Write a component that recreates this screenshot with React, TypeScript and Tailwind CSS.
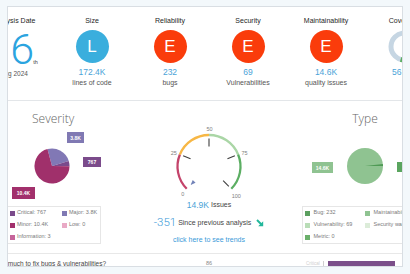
// Dashboard overview: quality gate metrics, severity / type breakdown and issue gauge.

const METRICS = [
  { title: "Size", letter: "L", circle: "bg-[#3aaedd]", value: "172.4K", sub: "lines of code" },
  { title: "Reliability", letter: "E", circle: "bg-[#fa3c0b]", value: "232", sub: "bugs" },
  { title: "Security", letter: "E", circle: "bg-[#fa3c0b]", value: "69", sub: "Vulnerabilities" },
  { title: "Maintainability", letter: "E", circle: "bg-[#fa3c0b]", value: "14.6K", sub: "quality issues" },
];

const SEVERITY_LEGEND = [
  { color: "bg-[#7b4b8b]", label: "Critical: 767" },
  { color: "bg-[#8079b3]", label: "Major: 3.8K" },
  { color: "bg-[#a2306c]", label: "Minor: 10.4K" },
  { color: "bg-[#e9a9c5]", label: "Low: 0" },
  { color: "bg-[#c6649a]", label: "Information: 3" },
];

const TYPE_LEGEND = [
  { color: "bg-[#5b9f5f]", label: "Bug: 232" },
  { color: "bg-[#8fc391]", label: "Maintainability: 14.6K" },
  { color: "bg-[#b9ddb7]", label: "Vulnerability: 69" },
  { color: "bg-[#dcecd9]", label: "Security warning: 0" },
  { color: "bg-[#6bb06b]", label: "Metric: 0" },
];

function Legend({ items, cols, gap }: { items: { color: string; label: string }[]; cols: string; gap: string }) {
  return (
    <div className={`grid ${cols} pl-[1.5px]`}>
      {items.map((it) => (
        <div key={it.label} className={`flex h-[12px] items-center ${gap} whitespace-nowrap`}>
          <span className={`h-[5px] w-[5px] shrink-0 ${it.color}`} />
          <span className="text-[5.5px] leading-none text-[#7a7a7a]">{it.label}</span>
        </div>
      ))}
    </div>
  );
}

function SeverityPie() {
  return (
    <svg width="108" height="76" viewBox="0 0 108 76">
      <path d="M44 40 L39.47 23.1 A17.5 17.5 0 0 1 60.74 34.88 Z" fill="#8178b5" />
      <path d="M44 40 L60.74 34.88 A17.5 17.5 0 0 1 61.5 40.31 Z" fill="#7a4a8c" />
      <path d="M44 40 L61.5 40.31 A17.5 17.5 0 1 1 39.47 23.1 Z" fill="#a0306b" />
      <rect x="59" y="6" width="17" height="11" fill="#8079b3" />
      <text x="67.5" y="11.7" fontSize="5" fontWeight="bold" fill="#fff" textAnchor="middle" dominantBaseline="central">3.8K</text>
      <rect x="75" y="31" width="18" height="10" fill="#7b4b8b" />
      <text x="84" y="36.2" fontSize="5" fontWeight="bold" fill="#fff" textAnchor="middle" dominantBaseline="central">767</text>
      <rect x="4" y="61" width="23" height="12" fill="#a2306c" />
      <text x="15.5" y="67.2" fontSize="5" fontWeight="bold" fill="#fff" textAnchor="middle" dominantBaseline="central">10.4K</text>
    </svg>
  );
}

function TypePie() {
  return (
    <svg width="126" height="76" viewBox="0 0 126 76">
      <circle cx="63" cy="40" r="18" fill="#8fc391" />
      <path d="M63 40 L80.9 38.12 A18 18 0 0 1 81 40 Z" fill="#4f9a55" />
      <rect x="10" y="36" width="21" height="11" fill="#8fc391" />
      <text x="20.5" y="41.7" fontSize="5" fontWeight="bold" fill="#fff" textAnchor="middle" dominantBaseline="central">14.6K</text>
      <rect x="95" y="36" width="22" height="10" fill="#5aa55f" />
      <text x="106" y="41.2" fontSize="5" fontWeight="bold" fill="#fff" textAnchor="middle" dominantBaseline="central">232</text>
    </svg>
  );
}

function Gauge() {
  const label = { fontSize: 5.5, fill: "#808080", textAnchor: "middle" as const, dominantBaseline: "central" as const };
  return (
    <svg width="186" height="99" viewBox="0 0 186 99">
      <g fill="none" strokeWidth="2.3">
        <path d="M70.73 87.77 A31.5 31.5 0 0 1 63.9 53.45" stroke="#c4446b" />
        <path d="M63.9 53.45 A31.5 31.5 0 0 1 93 34" stroke="#f7b745" />
        <path d="M93 34 A31.5 31.5 0 0 1 122.1 53.45" stroke="#aad6a6" />
        <path d="M122.1 53.45 A31.5 31.5 0 0 1 115.27 87.77" stroke="#5cae63" />
      </g>
      <g stroke="#3d3d3d" strokeWidth="1.1">
        <line x1="74.52" y1="57.85" x2="67.13" y2="54.79" />
        <line x1="93" y1="45.5" x2="93" y2="37.5" />
        <line x1="111.48" y1="57.85" x2="118.87" y2="54.79" />
        <line x1="107.14" y1="79.64" x2="112.8" y2="85.3" />
      </g>
      <polygon points="74.6,83.9 79.56,81.76 76.74,78.94" fill="#7283b8" />
      <text x="93.5" y="28.3" {...label}>50</text>
      <text x="57.8" y="51.7" {...label}>25</text>
      <text x="128.5" y="51.7" {...label}>75</text>
      <text x="66.7" y="93.3" {...label}>0</text>
      <text x="120.3" y="94.7" {...label}>100</text>
    </svg>
  );
}

export default function App() {
  return (
    <div className="h-[274px] w-[410px] overflow-hidden bg-[#f3f8fb] pl-[7px] pt-[6px] font-['Liberation_Sans',Arial,sans-serif]">
      <div className="flex h-[261px] w-[396px] flex-col overflow-hidden border border-[#d9dee3] bg-white">
        {/* metrics row */}
        <div className="flex h-[94px] shrink-0 border-b border-[#e3e6e9] pt-[9px]">
          <div className="-ml-[33px] flex w-[78px] shrink-0 flex-col items-center">
            <div className="whitespace-nowrap text-[7px] leading-[10px] text-[#262626]">Analysis Date</div>
            <div className="ml-[20px] mt-[4.9px] flex items-baseline">
              <span className="font-['Roboto'] text-[43px] font-light leading-[36px] text-[#2ba4df]">6</span>
              <span className="-ml-[1px] text-[5.5px] leading-none text-[#444]">th</span>
            </div>
            <div className="mt-[3.6px] whitespace-nowrap text-[6.5px] leading-[8px] text-[#555]">Aug 2024</div>
          </div>
          {METRICS.map((m) => (
            <div key={m.title} className="flex w-[78px] shrink-0 flex-col items-center">
              <div className="whitespace-nowrap text-[7px] leading-[10px] text-[#262626]">{m.title}</div>
              <div className={`mt-[4px] flex h-[33px] w-[33px] items-center justify-center rounded-full text-[17px] text-white ${m.circle}`}>
                {m.letter}
              </div>
              <div className="mt-[3.5px] text-[8.5px] leading-[11px] text-[#4aa3d8]">{m.value}</div>
              <div className="whitespace-nowrap text-[7px] leading-[10px] text-[#555]">{m.sub}</div>
            </div>
          ))}
          <div className="flex w-[78px] shrink-0 flex-col items-center">
            <div className="whitespace-nowrap text-[7px] leading-[10px] text-[#262626]">Coverage</div>
            <svg className="mt-[4px]" width="33" height="33" viewBox="0 0 33 33">
              <circle cx="16.5" cy="16.5" r="13.5" fill="none" stroke="#c6d6e3" strokeWidth="5" />
              <path d="M15.3 29.95 A13.5 13.5 0 0 1 12.6 29.4" fill="none" stroke="#5cae63" strokeWidth="5" />
            </svg>
            <div className="mt-[3.5px] text-[8.5px] leading-[11px] text-[#4aa3d8]">56.9%</div>
          </div>
        </div>

        {/* charts row */}
        <div className="flex h-[153px] shrink-0 border-b border-[#e8e8e8]">
          <div className="flex w-[108px] shrink-0 flex-col">
            <div className="ml-[24px] mt-[11px] font-['Open_Sans'] text-[12px] font-light leading-[14px] text-[#666]">Severity</div>
            <SeverityPie />
            <div className="mt-[4px] w-[93px] border-y border-r border-[#e6e6e6]">
              <Legend items={SEVERITY_LEGEND} cols="grid-cols-[52px_1fr]" gap="gap-[2.5px]" />
            </div>
          </div>

          <div className="flex w-[186px] shrink-0 flex-col items-center">
            <Gauge />
            <div className="flex h-[10px] items-center gap-[2px] whitespace-nowrap">
              <span className="text-[8.5px] text-[#4aa3d8]">14.9K</span>
              <span className="text-[7px] text-[#444]">Issues</span>
            </div>
            <div className="mt-[5px] flex h-[16px] items-center whitespace-nowrap">
              <span className="font-['Roboto'] text-[11.5px] font-light text-[#3d9ad8]">-351</span>
              <span className="ml-[2px] text-[7px] text-[#444]">Since previous analysis</span>
              <svg className="ml-[5px]" width="8" height="8" viewBox="0 0 8 8">
                <path d="M1 1 L6 6" stroke="#22b79b" strokeWidth="2" />
                <path d="M7.2 2.2 V7.2 H2.2 Z" fill="#22b79b" />
              </svg>
            </div>
            <div className="mt-[4px] whitespace-nowrap text-[7px] leading-[10px] text-[#3a9ad9]">click here to see trends</div>
          </div>

          <div className="flex w-[126px] shrink-0 flex-col">
            <div className="mt-[11px] text-center font-['Open_Sans'] text-[12px] font-light leading-[14px] text-[#666]">Type</div>
            <TypePie />
            <div className="mt-[4px] border-y border-l border-[#e6e6e6]">
              <Legend items={TYPE_LEGEND} cols="grid-cols-[60px_1fr]" gap="gap-[4px]" />
            </div>
          </div>
        </div>

        {/* remediation row */}
        <div className="flex min-h-0 flex-1 items-start overflow-hidden">
          <div className="w-[198px] shrink-0 overflow-hidden pt-[5px]">
            <div className="-ml-[15px] whitespace-nowrap text-[6.5px] leading-[10px] text-[#444]">
              How much to fix bugs &amp; vulnerabilities?
            </div>
          </div>
          <div className="w-[100px] shrink-0 pt-[6px] text-[5.5px] leading-[6px] text-[#888]">86</div>
          <div className="w-[17px] shrink-0 pt-[7px] text-[4.5px] leading-[5px] text-[#d0d0d0]">Critical</div>
          <div className="mt-[7px] h-[5px] w-px shrink-0 bg-[#cfcfcf]" />
          <div className="ml-[4px] mt-[7px] h-[10px] w-[67px] shrink-0 bg-[#7b4f8a]" />
        </div>
      </div>
    </div>
  );
}
